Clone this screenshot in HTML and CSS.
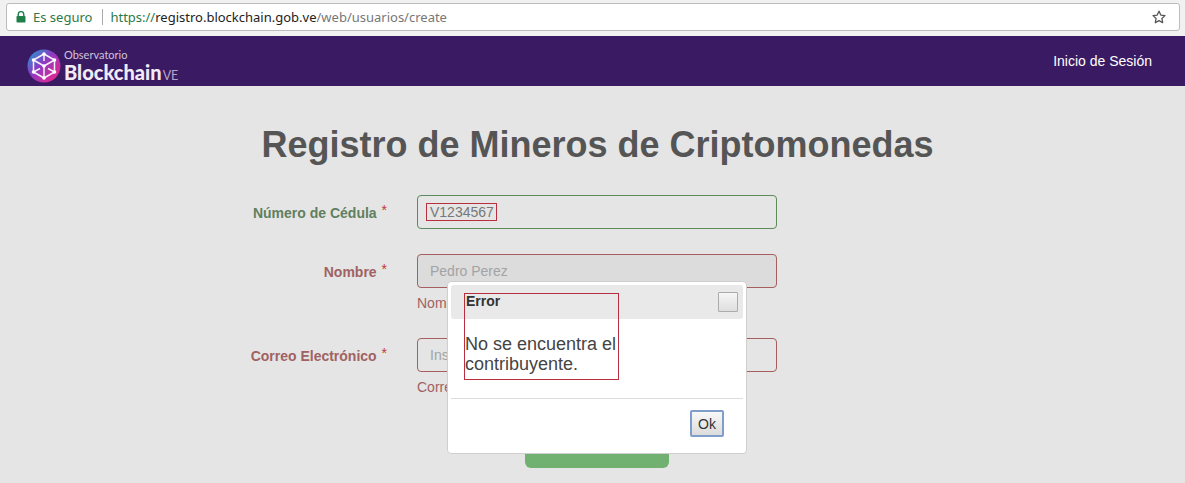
FILE: index.html
```html
<!DOCTYPE html>
<html lang="es">

<head>
    <meta charset="UTF-8">
    <title>Registro de Mineros de Criptomonedas</title>
    <link rel="stylesheet" href="styles.css">
</head>

<body>
    <div class="browser-bar">
        <div class="omnibox">
            <svg class="lock" width="10" height="12" viewBox="0 0 10 12">
                <path d="M2.2 5V3.400a2.800 2.800 0 0 1 5.600 0V5" fill="none" stroke="#1e8048" stroke-width="1.4" />
                <rect x="0.5" y="5" width="9" height="6.5" rx="0.8" fill="#1e8048" />
            </svg>
            <span class="secure">Es seguro</span>
            <span class="sep"></span>
            <span class="url"><i>https://</i><b>registro.blockchain.gob.ve</b>/web/usuarios/create</span>
            <svg class="star" width="14" height="14" viewBox="0 0 14 14">
                <path d="M7 1.200l1.800 3.900 4.200.5-3.100 2.900.8 4.200L7 10.600l-3.700 2.100.8-4.200L1 5.600l4.200-.5z" fill="none" stroke="#555" stroke-width="1.3" stroke-linejoin="round" />
            </svg>
        </div>
    </div>

    <nav class="navbar">
        <a class="brand" href="#">
            <svg class="brand-icon" width="34" height="34" viewBox="0 0 34 34">
                <defs>
                    <linearGradient id="logoGrad" x1="0.1" y1="0.1" x2="0.9" y2="0.9">
                        <stop offset="0" stop-color="#2f8fd0" />
                        <stop offset="0.4" stop-color="#8a3cc4" />
                        <stop offset="1" stop-color="#e8268c" />
                    </linearGradient>
                </defs>
                <circle cx="17" cy="17" r="16.5" fill="url(#logoGrad)" />
                <g fill="none" stroke="#f6effb" stroke-width="1.5" stroke-linejoin="round">
                    <path d="M17 5l10.500 6v12L17 29 6.500 23V11z" />
                    <path d="M6.500 11L17 17l10.500-6M17 17v12" />
                    <path d="M17 5v7M27.500 23L21 19.500M6.500 23L13 19.500" />
                </g>
                <g fill="#fff">
                    <circle cx="17" cy="5" r="1.8" />
                    <circle cx="27.500" cy="11" r="1.8" />
                    <circle cx="27.500" cy="23" r="1.8" />
                    <circle cx="17" cy="29" r="1.8" />
                    <circle cx="6.500" cy="23" r="1.8" />
                    <circle cx="6.500" cy="11" r="1.8" />
                    <circle cx="17" cy="17" r="1.8" />
                </g>
            </svg>
            <span class="brand-text">
                <span class="brand-top">Observatorio</span>
                <span class="brand-name">Blockchain<small>VE</small></span>
            </span>
        </a>
        <a class="nav-link" href="#">Inicio de Sesión</a>
    </nav>

    <main class="content">
        <h1>Registro de Mineros de Criptomonedas</h1>

        <form class="form">
            <div class="row valid">
                <label>Número de Cédula <span class="req">*</span></label>
                <div class="col">
                    <div class="field"><span class="mark">V1234567</span></div>
                </div>
            </div>

            <div class="row invalid">
                <label>Nombre <span class="req">*</span></label>
                <div class="col">
                    <input class="field disabled" type="text" placeholder="Pedro Perez" disabled>
                    <p class="help">Nombre</p>
                </div>
            </div>

            <div class="row invalid">
                <label>Correo Electrónico <span class="req">*</span></label>
                <div class="col">
                    <input class="field" type="text" placeholder="Inserte su correo">
                    <p class="help">Correo</p>
                </div>
            </div>

            <button class="submit" type="button"></button>
        </form>
    </main>

    <div class="modal">
        <div class="modal-head">
            <span class="modal-title">Error</span>
            <button class="modal-close" type="button"></button>
        </div>
        <p class="modal-msg">No se encuentra el contribuyente.</p>
        <div class="modal-foot">
            <button class="ok" type="button">Ok</button>
        </div>
        <div class="mark-box"></div>
    </div>
</body>

</html>
```

FILE: styles.css
```css
* {
    box-sizing: border-box;
}

body {
    margin: 0;
    height: 483px;
    overflow: hidden;
    background: #e5e5e5;
    color: #555;
    font-family: "Liberation Sans", sans-serif;
    font-size: 14px;
}

/* barra del navegador */
.browser-bar {
    height: 36px;
    padding: 3px 5px 0 6px;
    background: #f2f1f2;
}

.omnibox {
    display: flex;
    align-items: center;
    height: 28px;
    padding: 0 13px 0 9px;
    background: #fff;
    border: 1px solid #bcbcbc;
    border-radius: 3px;
    font-family: "Noto Sans", sans-serif;
    font-size: 13px;
}

.secure {
    margin-left: 7px;
    color: #2b7a48;
}

.sep {
    width: 1px;
    height: 16px;
    margin: 0 7px 0 10px;
    background: #aaa;
}

.url {
    flex: 1;
    color: #777;
}

.url i {
    font-style: normal;
    color: #2b7a48;
}

.url b {
    font-weight: normal;
    color: #222;
}

/* navbar */
.navbar {
    display: flex;
    align-items: center;
    justify-content: space-between;
    height: 50px;
    padding: 0 33px 0 27px;
    background: #3a1a63;
}

.navbar a {
    color: #fff;
    text-decoration: none;
}

.brand {
    display: flex;
    align-items: center;
    gap: 3px;
    margin-top: 10px;
}

.brand-text {
    display: flex;
    flex-direction: column;
    padding-top: 4px;
}

.brand-top {
    font-family: Lato, sans-serif;
    font-size: 11px;
    line-height: 12px;
    color: #cfc4dd;
}

.brand-name {
    font-family: Lato, sans-serif;
    font-size: 20px;
    font-weight: 900;
    line-height: 22px;
    color: #f1ebf6;
}

.brand-name small {
    margin-left: 1px;
    font-size: 12.5px;
    font-weight: 400;
    color: #b5a6c8;
}

.nav-link {
    font-size: 14px;
    margin-bottom: 1px;
}

/* formulario */
.content {
    height: 397px;
}

h1 {
    margin: 0;
    padding: 36px 0 0 10px;
    height: 109px;
    font-size: 36px;
    line-height: 45px;
    font-weight: bold;
    text-align: center;
    color: #555;
}

.row {
    display: flex;
    gap: 30px;
}

.row label {
    width: 387px;
    padding-top: 10px;
    text-align: right;
    font-weight: bold;
    line-height: 16px;
}

.req {
    position: relative;
    top: -3px;
    margin-left: 1px;
    color: #c0392b;
    font-weight: normal;
}

.valid label {
    color: #5f7f5f;
}

.invalid label {
    color: #a06262;
}

.col {
    width: 360px;
}

.valid {
    height: 59px;
}

.invalid {
    height: 84px;
}

.field {
    display: block;
    width: 100%;
    height: 34px;
    padding: 0 12px;
    background: transparent;
    border-radius: 4px;
    font-family: inherit;
    font-size: 14px;
    outline: 0;
}

.valid .field {
    padding: 7px 8px;
    border: 1px solid #5b8a5b;
    color: #777;
    line-height: 16px;
}

.invalid .field {
    border: 1px solid #a55f5f;
}

.field.disabled {
    background: #dcdcdc;
}

.field::placeholder {
    color: #a3a3a3;
}

.mark {
    display: inline-block;
    padding: 0 2px 0 3px;
    height: 18px;
    line-height: 16px;
    border: 1px solid #b8303f;
}

.help {
    margin: 7px 0 0;
    line-height: 16px;
    color: #a06262;
}

.submit {
    display: block;
    width: 144px;
    height: 46px;
    margin-left: 525px;
    background: #70b070;
    border: 0;
    border-radius: 6px;
}

/* modal de error */
.modal {
    position: absolute;
    left: 447px;
    top: 281px;
    width: 300px;
    height: 173px;
    padding: 3px;
    background: #fff;
    border: 1px solid #cfcfcf;
    border-radius: 4px;
}

.modal-head {
    display: flex;
    align-items: center;
    justify-content: space-between;
    height: 34px;
    padding: 0 5px 0 15px;
    background: #e9e9e9;
    border-radius: 3px;
}

.modal-title {
    margin-bottom: 2px;
    font-weight: bold;
    color: #333;
}

.modal-close {
    width: 20px;
    height: 20px;
    padding: 0;
    background: linear-gradient(#f6f6f6, #dedede);
    border: 1px solid #ababab;
    border-radius: 1px;
}

.modal-msg {
    width: 172px;
    height: 79px;
    margin: 0;
    padding: 15px 0 0 14px;
    font-size: 18px;
    line-height: 20px;
    color: #444;
}

.modal-foot {
    display: flex;
    justify-content: flex-end;
    height: 51px;
    padding: 11px 19px 0 0;
    border-top: 1px solid #ddd;
}

.ok {
    width: 34px;
    height: 27px;
    padding: 0;
    background: linear-gradient(#f8f8f8, #dcdcdc);
    border: 2px solid #7f9fca;
    border-radius: 2px;
    font-family: inherit;
    font-size: 14px;
    color: #333;
}

.mark-box {
    position: absolute;
    left: 16px;
    top: 11px;
    width: 155px;
    height: 87px;
    border: 1px solid #b8303f;
}
```
